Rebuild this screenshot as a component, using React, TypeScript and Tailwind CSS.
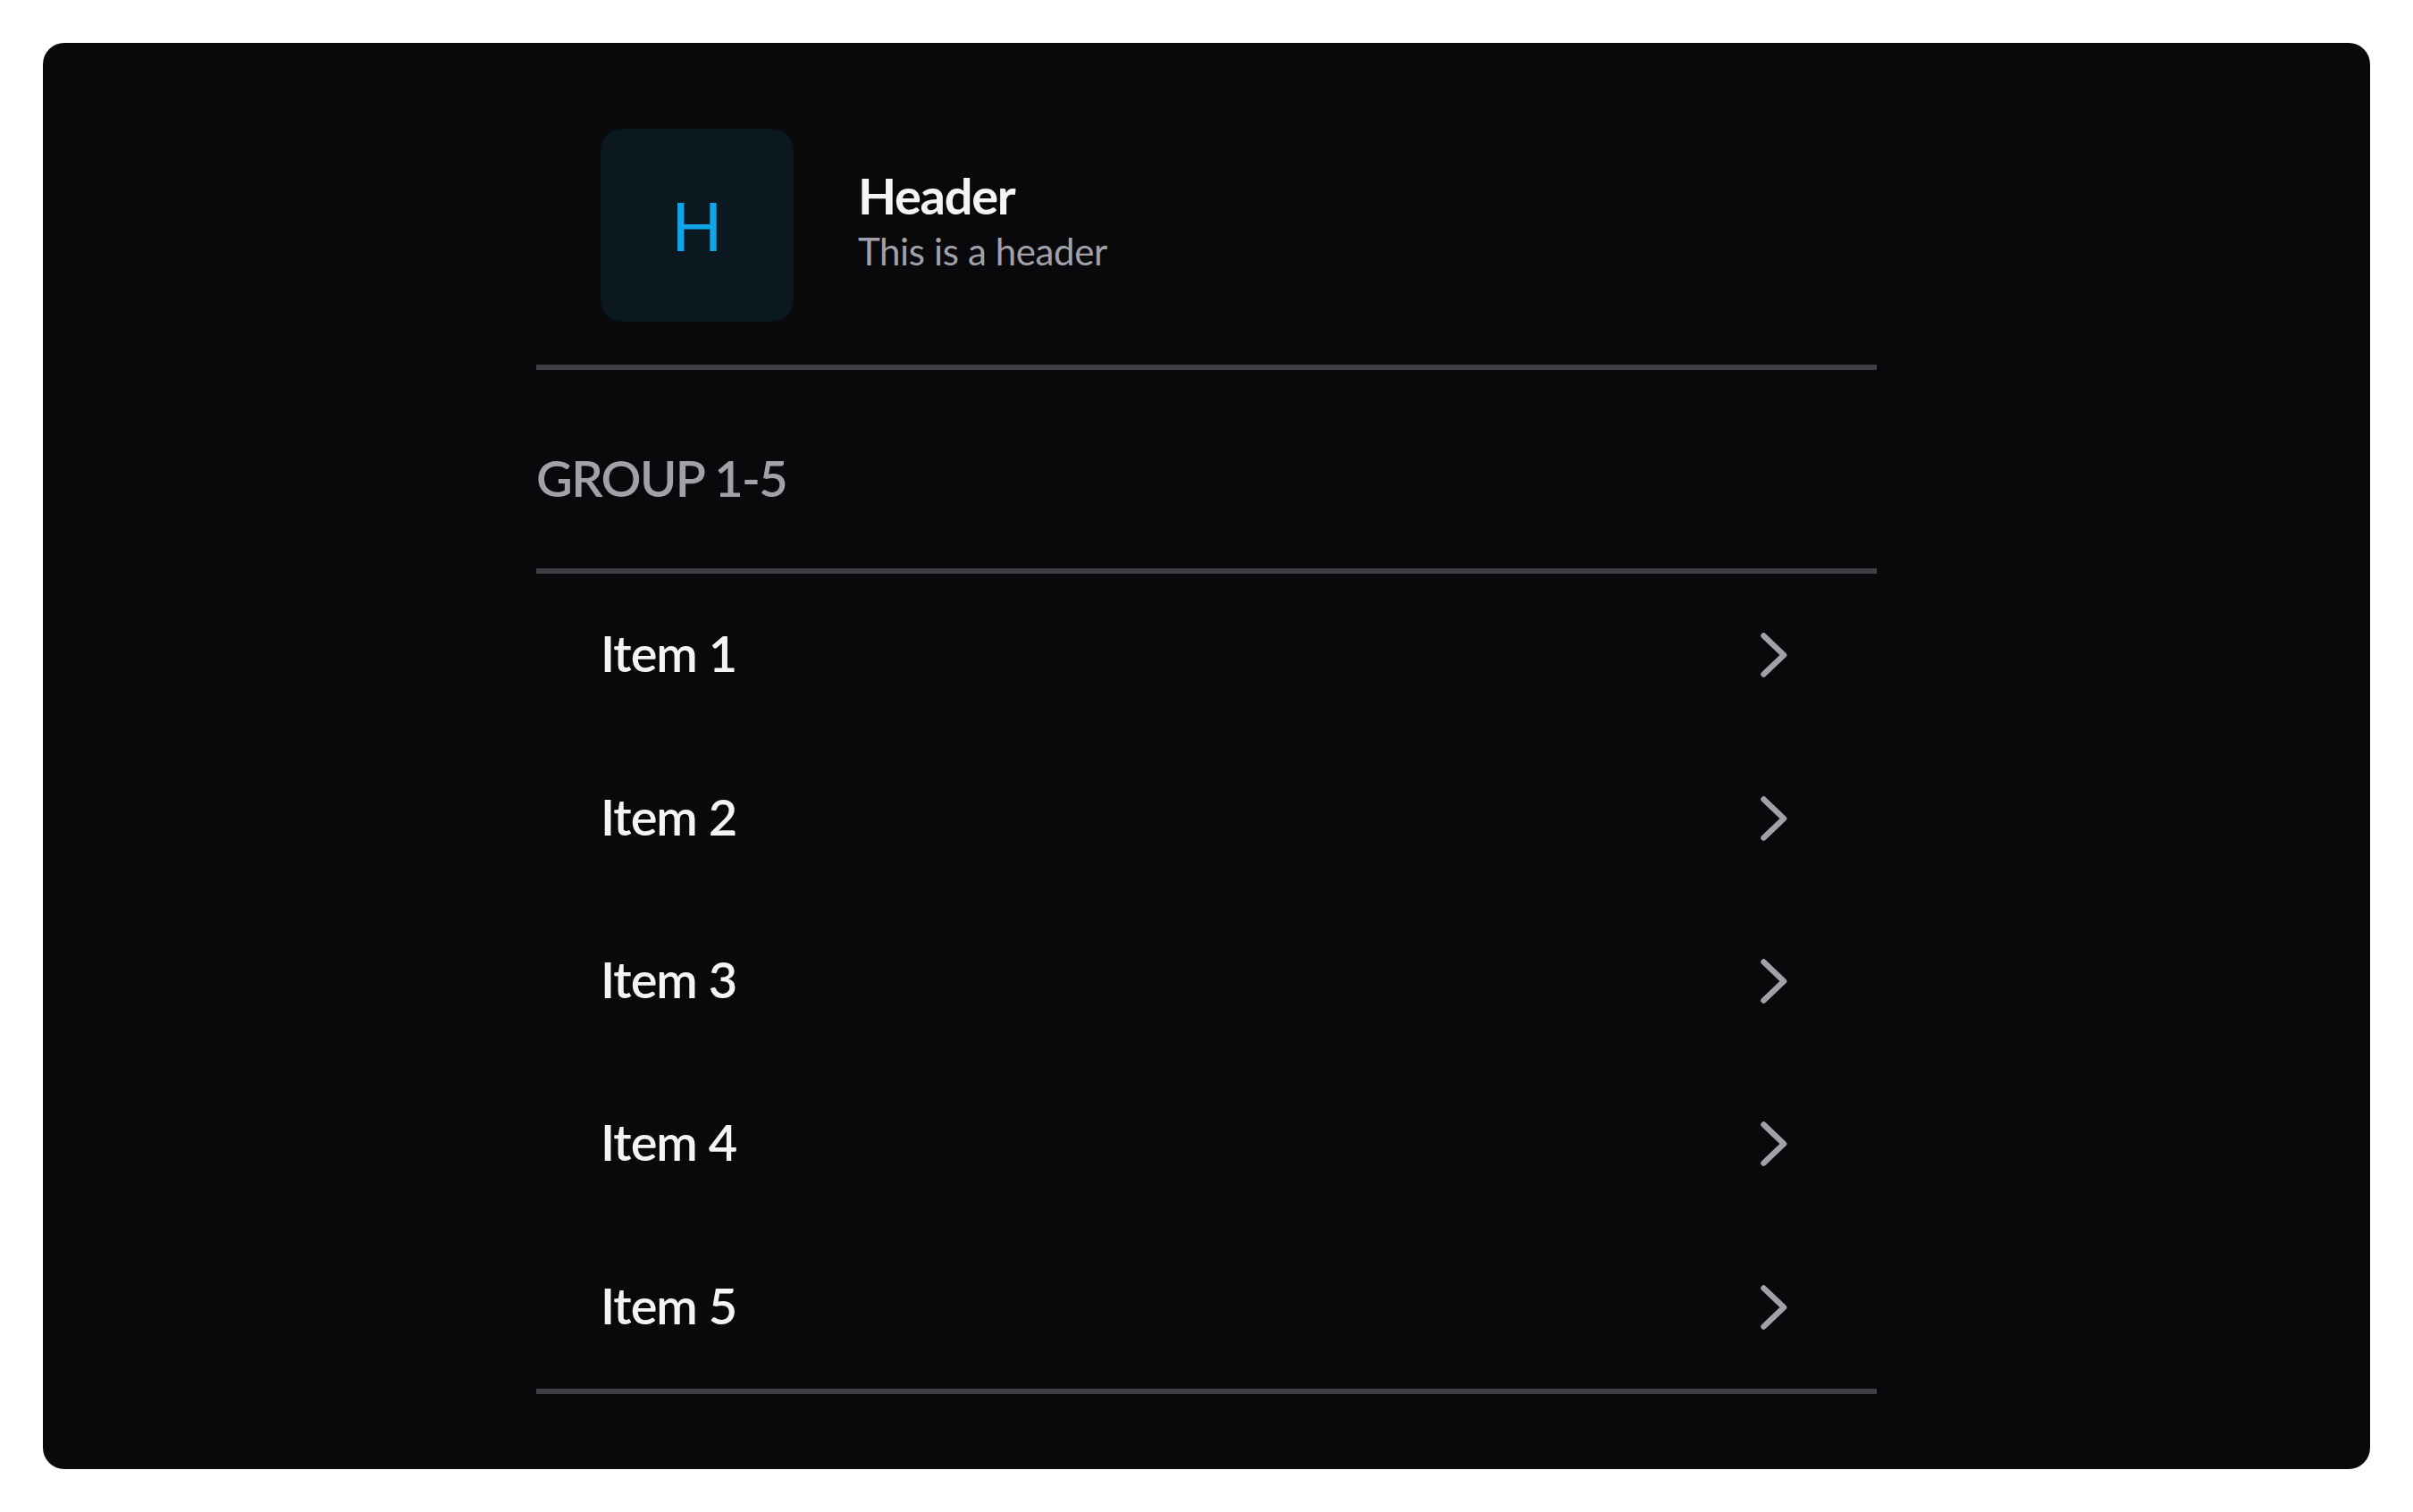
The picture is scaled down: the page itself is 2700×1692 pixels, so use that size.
const items = ["Item 1", "Item 2", "Item 3", "Item 4", "Item 5"];

function Chevron() {
  return (
    <svg width="30" height="50" viewBox="0 0 30 50" fill="none">
      <path
        d="M3.5 3.5 L26 25 L3.5 46.5"
        stroke="#a1a1aa"
        strokeWidth="6.5"
        strokeLinecap="round"
        strokeLinejoin="round"
      />
    </svg>
  );
}

export default function App() {
  return (
    <div className="min-h-screen bg-white p-12 font-['Lato','Noto_Sans',sans-serif]">
      <div className="rounded-3xl bg-[#09090b] pt-24 pb-[84px]">
        <div className="mx-auto w-[1500px]">
          {/* Header */}
          <div className="flex items-center gap-[72px] pl-[72px] pb-12">
            <div className="flex h-[216px] w-[216px] items-center justify-center rounded-3xl bg-[#0b1820]">
              <span className="text-[75px] leading-none text-[#0ea5e9]">H</span>
            </div>
            <div className="flex flex-col">
              <span className="text-[56px] font-bold leading-[59px] tracking-[-0.023em] text-[#f4f4f5]">Header</span>
              <span className="text-[42px] leading-[67px] tracking-[-0.009em] text-[#a1a1aa]">This is a header</span>
            </div>
          </div>
          <div className="h-[6px] bg-[#3f3f46]" />

          {/* Group label */}
          <div className="pt-[87px] pb-[68px]">
            <span className="block text-[56px] font-semibold leading-[67px] tracking-[-0.029em] text-[#a1a1aa]">GROUP 1-5</span>
          </div>
          <div className="h-[6px] bg-[#3f3f46]" />

          {/* Items */}
          <div className="flex flex-col">
            {items.map((item) => (
              <div key={item} className="flex h-[182.4px] items-center justify-between pl-[72px] pr-[100px]">
                <span className="pb-[5px] text-[56px] font-semibold leading-[67px] tracking-[-0.018em] text-[#f4f4f5]">{item}</span>
                <Chevron />
              </div>
            ))}
          </div>
          <div className="h-[6px] bg-[#3f3f46]" />
        </div>
      </div>
    </div>
  );
}
